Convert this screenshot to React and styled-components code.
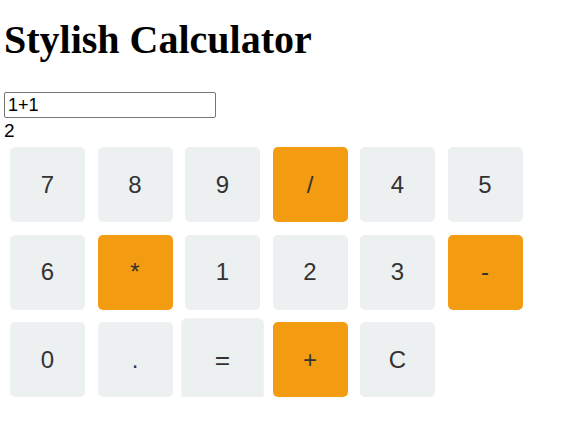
import React, { useState } from "react";
import styled, { createGlobalStyle } from "styled-components";

const GlobalStyle = createGlobalStyle`
  body {
    margin: 4px;
    font-family: "Liberation Serif", "Times New Roman", serif;
    background: #fff;
  }
`;

const keys = [
  { label: "7" },
  { label: "8" },
  { label: "9" },
  { label: "/", op: true },
  { label: "4" },
  { label: "5" },
  { label: "6" },
  { label: "*", op: true },
  { label: "1" },
  { label: "2" },
  { label: "3" },
  { label: "-", op: true },
  { label: "0" },
  { label: "." },
  { label: "=", hovered: true },
  { label: "+", op: true },
  { label: "C" }
];

const App = () => {
  const [expr, setExpr] = useState("1+1");
  const [result] = useState("2");

  return (
    <Calculator>
      <GlobalStyle />
      <Title>Stylish Calculator</Title>
      <Display
        type="text"
        value={expr}
        onChange={e => setExpr(e.target.value)}
      />
      <Result>{result}</Result>
      <Keypad>
        {keys.map(k => (
          <Key key={k.label} op={k.op} hovered={k.hovered}>
            {k.label}
          </Key>
        ))}
      </Keypad>
    </Calculator>
  );
};

const Calculator = styled.div`
  display: block;
`;

const Title = styled.h1`
  font-size: 40px;
  line-height: 46px;
  font-weight: bold;
  margin: 13px 0 29px 0;
`;

const Display = styled.input`
  display: block;
  box-sizing: border-box;
  width: 212px;
  height: 26px;
  padding: 1px 3px;
  border: 1px solid #767676;
  border-radius: 2px;
  font-family: "Liberation Sans", Arial, sans-serif;
  font-size: 18px;
  color: #000;
  outline: none;
`;

const Result = styled.div`
  font-family: "Liberation Sans", Arial, sans-serif;
  font-size: 19px;
  line-height: 26px;
  color: #000;
`;

const Keypad = styled.div`
  display: flex;
  flex-wrap: wrap;
  gap: 12.5px;
  margin: 3px 0 0 6px;
`;

const Key = styled.button`
  width: 75px;
  height: 75px;
  border: none;
  border-radius: 5px;
  background: ${props => (props.op ? "#f39c12" : "#ecf0f1")};
  color: #333;
  font-family: "Liberation Sans", Arial, sans-serif;
  font-size: 24px;
  cursor: pointer;
  transform: ${props => (props.hovered ? "scale(1.1)" : "none")};
  transition: transform 0.2s;

  &:hover {
    transform: scale(1.1);
  }
`;

export default App;
